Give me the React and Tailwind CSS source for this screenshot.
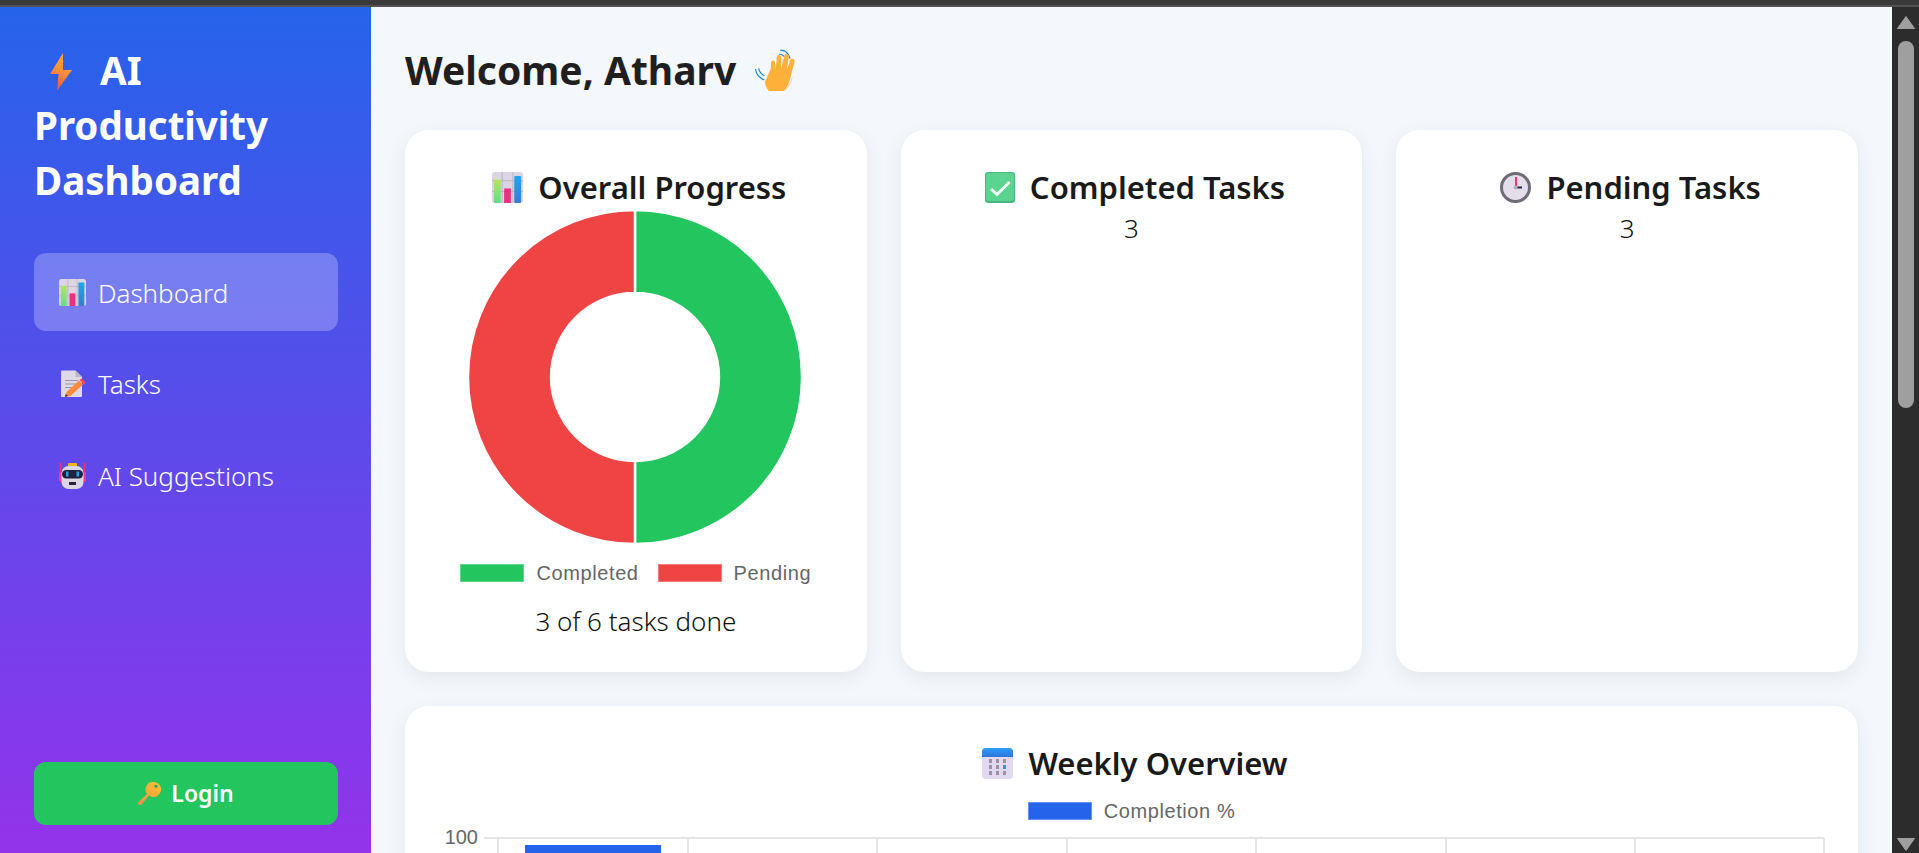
import React from "react";

const BarIcon = ({ className }) => (
  <svg viewBox="0 0 32 32" className={className}>
    <defs>
      <linearGradient id="barG" x1="0" y1="0" x2="0" y2="1"><stop offset="0" stopColor="#b4e65a" /><stop offset="1" stopColor="#5fdc8c" /></linearGradient>
      <linearGradient id="barB" x1="0" y1="0" x2="0" y2="1"><stop offset="0" stopColor="#1fa5f2" /><stop offset="1" stopColor="#3a7bd0" /></linearGradient>
    </defs>
    <rect x="0" y="0" width="32" height="32" rx="3" fill="#dcd6e4" />
    <path d="M0 9h32M0 20h32M10.500 0v32M21.500 0v32" stroke="#b9b3c2" strokeWidth="1" />
    <rect x="2" y="8" width="7" height="24" fill="url(#barG)" />
    <rect x="12.500" y="17" width="7" height="15" fill="#e8327f" />
    <rect x="23" y="4" width="7" height="28" rx="1" fill="url(#barB)" />
  </svg>
);

const Bolt = ({ className }) => (
  <svg viewBox="0 0 22 38" className={className}>
    <defs>
      <linearGradient id="boltG" x1="0.600" y1="0" x2="0.300" y2="1"><stop offset="0" stopColor="#ffa63a" /><stop offset="0.500" stopColor="#ff8c3c" /><stop offset="1" stopColor="#f0484e" /></linearGradient>
    </defs>
    <path d="M13 0L0 21h8.500L7 38 22 17h-9z" fill="url(#boltG)" />
  </svg>
);

const Memo = ({ className }) => (
  <svg viewBox="0 0 27 27" className={className}>
    <path d="M2 1.500a1 1 0 0 1 1-1h13.500L23 7v19a1 1 0 0 1-1 1H3a1 1 0 0 1-1-1z" fill="#dfd8e6" />
    <path d="M16.500 .5L23 7h-6.500z" fill="#bdb6c6" />
    <path d="M6 10.500h13M6 14h12M6 17.500h7" stroke="#9b94a6" strokeWidth="1.200" />
    <path d="M6 27l1.500-5L20 10.500l4 4L11.500 26z" fill="#ff8a3c" />
    <path d="M20.500 10l2-1.500 4 4-2 2z" fill="#f4504e" />
    <path d="M6 27l.8-3 2.200 2z" fill="#3a2a40" />
  </svg>
);

const Robot = ({ className }) => (
  <svg viewBox="0 0 27 27" className={className}>
    <rect x="0.500" y="0.500" width="2" height="20" rx="1" fill="#ef2f6e" />
    <rect x="24.500" y="0.500" width="2" height="20" rx="1" fill="#ef2f6e" />
    <rect x="0" y="10" width="3" height="9" rx="1" fill="#f0379a" />
    <rect x="24" y="10" width="3" height="9" rx="1" fill="#f0379a" />
    <rect x="9" y="1" width="9" height="4" rx="1" fill="#f5b21f" />
    <rect x="2.500" y="4" width="22" height="23" rx="7" fill="#ddd5e3" />
    <rect x="3" y="8" width="21" height="8.500" rx="4.200" fill="#1f2140" />
    <rect x="7" y="9.500" width="2.500" height="5" fill="#1ba3e8" />
    <rect x="17.500" y="9.500" width="2.500" height="5" fill="#1ba3e8" />
    <rect x="10" y="20" width="7" height="3" fill="#2a2238" />
  </svg>
);

const KeyIcon = ({ className }) => (
  <svg viewBox="0 0 23 23" className={className}>
    <defs>
      <linearGradient id="keyG" x1="1" y1="0" x2="0" y2="1"><stop offset="0" stopColor="#ffc42e" /><stop offset="1" stopColor="#f98a4a" /></linearGradient>
    </defs>
    <path d="M15.500 0A7.500 7.500 0 1 1 11 13.500L3.500 22.500a1.800 1.800 0 0 1-3-2.500l8.500-8A7.500 7.500 0 0 1 15.500 0z" fill="url(#keyG)" />
    <rect x="16.500" y="3" width="3" height="2.500" fill="#16a86a" />
  </svg>
);

const Wave = ({ className }) => (
  <svg viewBox="0 0 42 40" className={className}>
    <path d="M24 1c4 0 8 2.500 9.500 8M23 5c3 0 5.500 2 6.500 5M0.500 19c.5 4.500 3.500 8.500 8.500 10.500M3.500 18.500c.5 3 2.500 5.500 5.500 7" fill="none" stroke="#1b87d6" strokeWidth="1.100" />
    <g transform="translate(4 -3) rotate(24 20 20) scale(1.15)">
      <path d="M11 22l-2-5c-.6-2 2-3 3-1.200l3 5.200-3.500-10c-.7-2.200 2.300-3.300 3.300-1.200l4 9-2-11.500c-.4-2.400 3-3 3.700-.7l3 10.900-.7-8.500c-.2-2.300 3.200-2.700 3.700-.4l2 11.500c1 5 1.500 9 .5 13-1.300 4-5 7-9.500 6.800-4-.2-6.500-2.500-8.500-5.800z" fill="#ffb13c" />
      <path d="M17 38c5 1 10-1 12.500-6 1.500-3.500 1.500-8 .5-13 .8 5 .6 10-1 13.500-2 4-7 6.500-12 5.500z" fill="#f08a2e" />
    </g>
  </svg>
);

const Check = ({ className }) => (
  <svg viewBox="0 0 30 31" className={className}>
    <rect width="30" height="31" rx="3" fill="#46b87f" />
    <rect x="1" y="1" width="28" height="28" rx="3" fill="#5cd391" />
    <path d="M6 17l6 5.500L24.500 10" fill="none" stroke="#f4faf6" strokeWidth="3" />
  </svg>
);

const Clock = ({ className }) => (
  <svg viewBox="0 0 31 31" className={className}>
    <circle cx="15.500" cy="15.500" r="15.500" fill="#6f6c77" />
    <circle cx="15.500" cy="15.500" r="12.500" fill="#e3dee9" />
    <rect x="15" y="5" width="2" height="10.500" fill="#f0346e" />
    <rect x="17" y="14.500" width="5" height="2" fill="#2e2648" />
    <circle cx="15.500" cy="15.500" r="2" fill="#b6b0bd" />
  </svg>
);

const Calendar = ({ className }) => (
  <svg viewBox="0 0 31 31" className={className}>
    <defs>
      <linearGradient id="calG" x1="0" y1="0" x2="0" y2="1"><stop offset="0" stopColor="#2aa0fb" /><stop offset="1" stopColor="#2f73d8" /></linearGradient>
    </defs>
    <rect width="31" height="31" rx="4" fill="#e2d8ef" />
    <path d="M0 9V4a4 4 0 0 1 4-4h23a4 4 0 0 1 4 4v5z" fill="url(#calG)" />
    <g fill="#9a93a6">
      <rect x="7" y="11" width="3" height="4" /><rect x="14" y="11" width="3" height="4" /><rect x="21" y="11" width="3" height="4" />
      <rect x="7" y="17" width="3" height="4" /><rect x="14" y="17" width="3" height="4" />
      <rect x="7" y="23" width="3" height="4" /><rect x="14" y="23" width="3" height="4" /><rect x="21" y="23" width="3" height="4" />
    </g>
    <rect x="21" y="17" width="3" height="4" fill="#2a94f0" />
  </svg>
);

const Donut = () => (
  <svg viewBox="0 0 336 336" className="w-[336px] h-[336px] block mr-[2px]">
    <path d="M168 1a167 167 0 0 1 0 334V252a84 84 0 0 0 0-168z" fill="#22c55e" stroke="#ffffff" strokeWidth="2.400" />
    <path d="M168 335a167 167 0 0 1 0-334V84a84 84 0 0 0 0 168z" fill="#ef4444" stroke="#ffffff" strokeWidth="2.400" />
  </svg>
);

const NavItem = ({ icon, label, active }) => (
  <div className={`h-[78px] rounded-[12px] flex items-center pl-[25px] gap-[12px] text-[26px] font-light text-white ${active ? "bg-white/25" : ""}`}>
    {icon}
    <span className="pt-[2px]">{label}</span>
  </div>
);

const Title = ({ icon, children }) => (
  <h3 className="flex items-center justify-center gap-[15px] pl-[7px] text-[31px] leading-[40px] font-semibold text-[#1a1a1a]">
    {icon}
    <span>{children}</span>
  </h3>
);

const LegendItem = ({ color, label }) => (
  <div className="flex items-center gap-[12px]">
    <span className={`w-[64px] h-[18px] border border-white/30 ${color}`} />
    <span className="font-['Liberation_Sans',Arial,sans-serif] text-[20px] leading-[20px] tracking-[0.6px] text-[#666666]">{label}</span>
  </div>
);

const Chart = () => (
  <svg viewBox="0 0 1400 40" className="w-[1400px] h-[40px] block overflow-visible -ml-[9px]">
    <g stroke="#e5e5e5" strokeWidth="2">
      <path d="M54 8H1394" />
      <path d="M68 8V60M258 8V60M447 8V60M637 8V60M826 8V60M1016 8V60M1205 8V60M1394 8V60" />
    </g>
    <rect x="95" y="15" width="136" height="40" fill="#2563eb" />
    <text x="48" y="14" textAnchor="end" fontFamily="'Liberation Sans', Arial, sans-serif" fontSize="20" fill="#666666">100</text>
  </svg>
);

export default function App() {
  return (
    <div className="h-[853px] w-full overflow-hidden flex flex-col font-['Noto_Sans','Open_Sans',sans-serif]">
      <div className="h-[7px] shrink-0 bg-[#3a3a3a] border-b-2 border-[#525252]" />
      <div className="flex-1 flex min-h-0">
        <aside className="w-[371px] shrink-0 bg-[linear-gradient(to_bottom,#2563eb,#9333ea)] pl-[34px] pr-[33px] pt-[36px] pb-[28px] flex flex-col">
          <h1 className="text-[38.500px] leading-[55px] font-bold text-white">
            <Bolt className="inline-block w-[22px] h-[38px] ml-[16px] mr-[28px] align-[-6px]" />
            AI Productivity Dashboard
          </h1>
          <nav className="mt-[45px] flex flex-col gap-[13.500px]">
            <NavItem active label="Dashboard" icon={<BarIcon className="w-[27px] h-[27px]" />} />
            <NavItem label="Tasks" icon={<Memo className="w-[27px] h-[27px]" />} />
            <NavItem label="AI Suggestions" icon={<Robot className="w-[27px] h-[27px]" />} />
          </nav>
          <button className="mt-auto h-[63px] rounded-[12px] bg-[#22c55e] text-white text-[23px] font-semibold flex items-center justify-center gap-[10px]">
            <KeyIcon className="w-[23px] h-[23px]" />
            <span>Login</span>
          </button>
        </aside>

        <main className="flex-1 min-w-0 bg-[#f4f7fc] pl-[34px] pr-[34px] pt-[28px] overflow-hidden">
          <div className="flex items-center gap-[19px] h-[69px]">
            <h1 className="text-[39px] leading-[50px] font-bold text-[#1f1f1f]">Welcome, Atharv</h1>
            <Wave className="w-[44px] h-[42px]" />
          </div>
          <div className="mt-[26px] grid grid-cols-3 gap-[34px]">
            <section className="h-[542px] bg-white rounded-[24px] shadow-[0_6px_20px_rgba(0,0,0,0.07)] pt-[37px] flex flex-col items-center">
              <Title icon={<BarIcon className="w-[31px] h-[31px]" />}>Overall Progress</Title>
              <div className="mt-[2px]"><Donut /></div>
              <div className="mt-[18px] flex gap-[19px]">
                <LegendItem color="bg-[#22c55e]" label="Completed" />
                <LegendItem color="bg-[#ef4444]" label="Pending" />
              </div>
              <p className="mt-[21px] text-[26px] leading-[34px] font-light text-[#111111]">3 of 6 tasks done</p>
            </section>
            <section className="h-[542px] bg-white rounded-[24px] shadow-[0_6px_20px_rgba(0,0,0,0.07)] pt-[37px] flex flex-col items-center">
              <Title icon={<Check className="w-[30px] h-[31px]" />}>Completed Tasks</Title>
              <p className="mt-[4px] text-[26px] leading-[34px] font-light text-[#111111]">3</p>
            </section>
            <section className="h-[542px] bg-white rounded-[24px] shadow-[0_6px_20px_rgba(0,0,0,0.07)] pt-[37px] flex flex-col items-center">
              <Title icon={<Clock className="w-[31px] h-[31px]" />}>Pending Tasks</Title>
              <p className="mt-[4px] text-[26px] leading-[34px] font-light text-[#111111]">3</p>
            </section>
          </div>
          <section className="mt-[34px] bg-white rounded-[24px] shadow-[0_6px_20px_rgba(0,0,0,0.07)] pt-[37px] px-[34px] pb-[40px] flex flex-col items-center">
            <Title icon={<Calendar className="w-[31px] h-[31px]" />}>Weekly Overview</Title>
            <div className="mt-[18px]">
              <LegendItem color="bg-[#2563eb]" label="Completion %" />
            </div>
            <div className="self-start mt-[9px]"><Chart /></div>
          </section>
        </main>

        <div className="w-[27px] shrink-0 bg-[#2c2c2c] flex flex-col items-center pt-[9px] pb-[2px]">
          <svg viewBox="0 0 18 13" className="w-[18px] h-[13px]"><path d="M9 0.500L17.500 12.500H.5z" fill="#9f9f9f" strokeLinejoin="round" stroke="#9f9f9f" /></svg>
          <div className="mt-[12px] w-[16px] h-[367px] rounded-full bg-[#9f9f9f]" />
          <svg viewBox="0 0 18 13" className="w-[18px] h-[13px] mt-auto"><path d="M9 12.500L17.500 .5H.5z" fill="#9f9f9f" strokeLinejoin="round" stroke="#9f9f9f" /></svg>
        </div>
      </div>
    </div>
  );
}
